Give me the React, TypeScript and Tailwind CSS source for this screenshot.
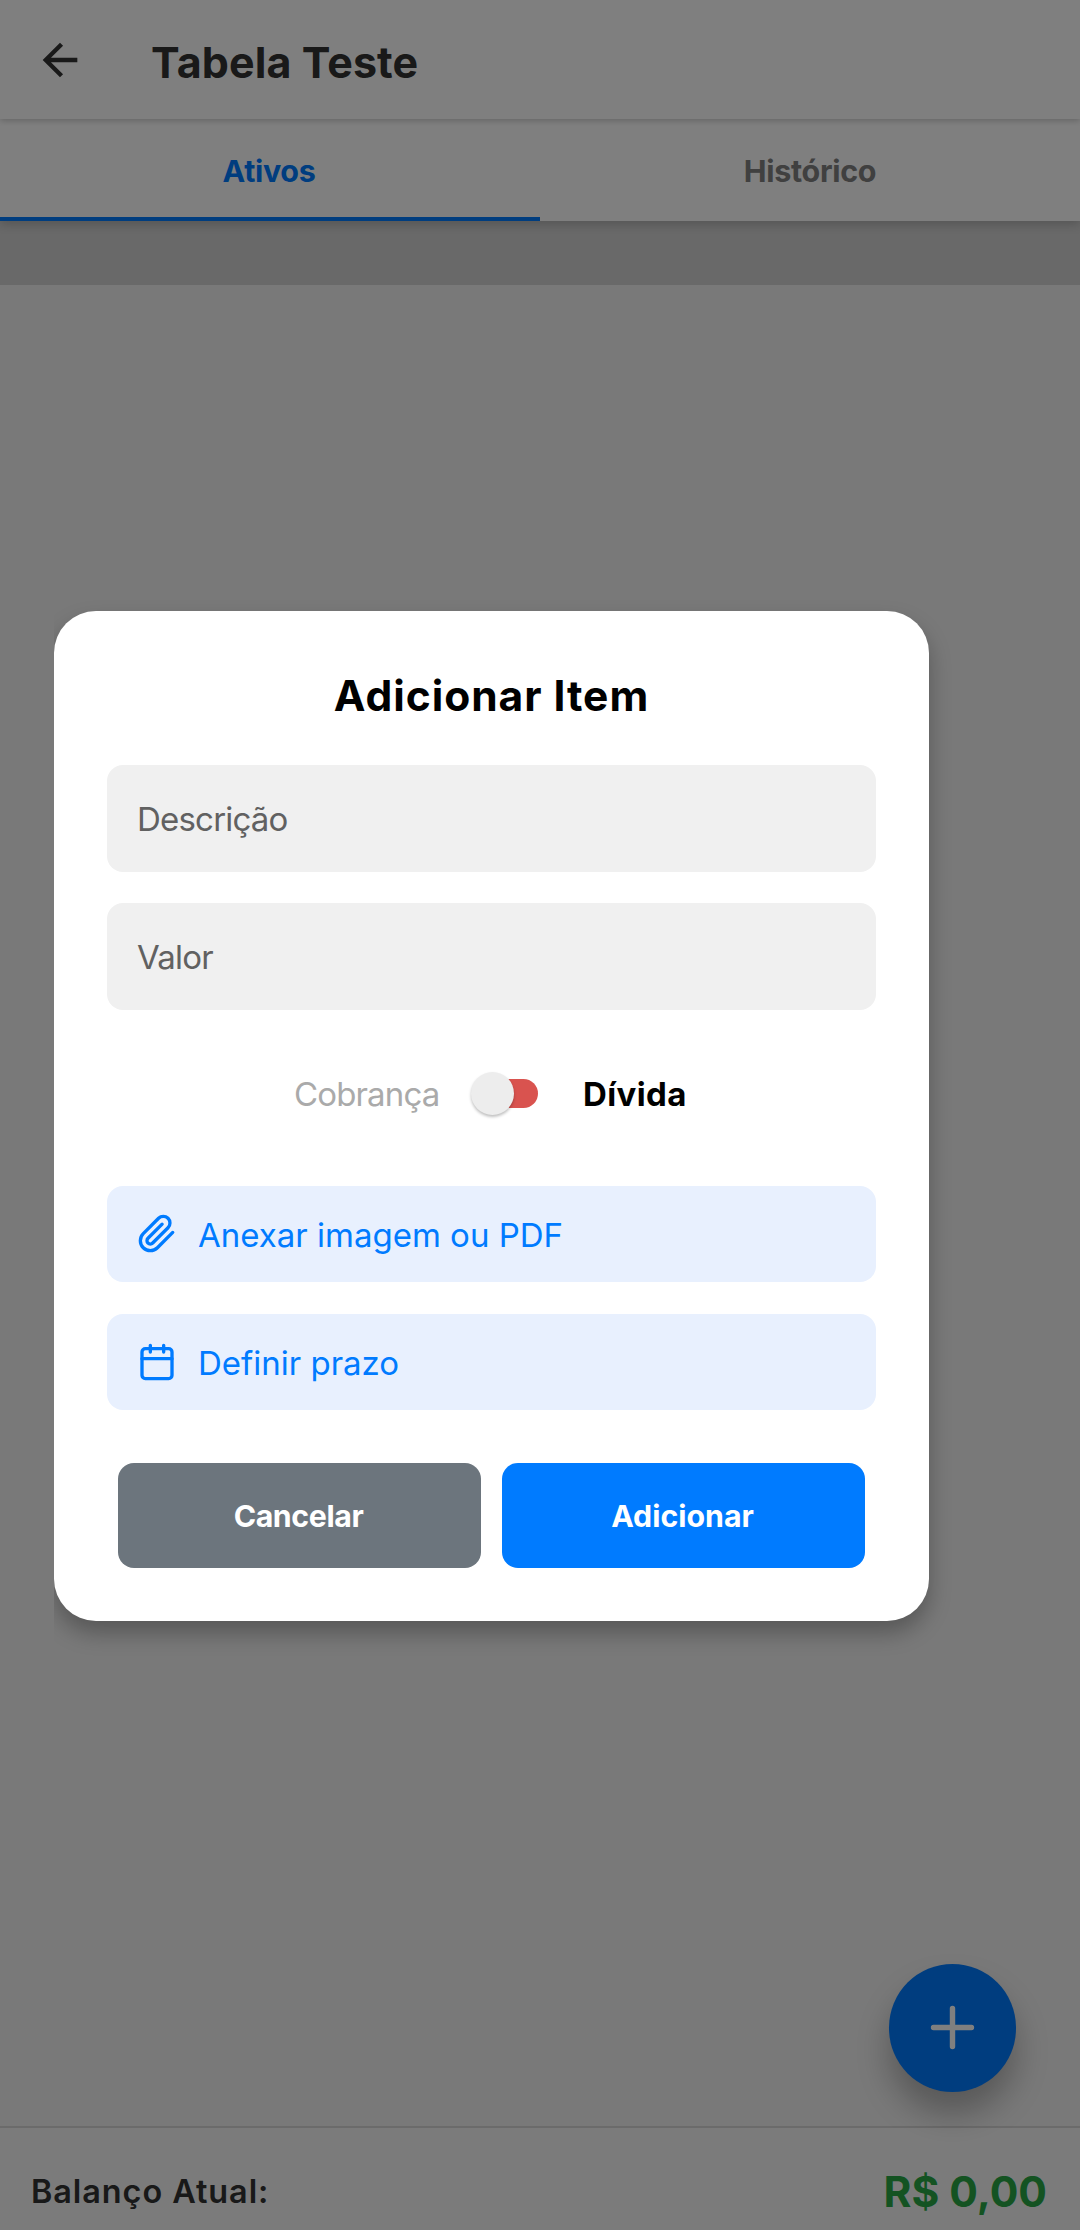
import type { ReactNode } from 'react';

function BackIcon() {
  return (
    <svg viewBox="0 0 24 24" className="h-[52px] w-[52px] shrink-0 fill-[#333333]">
      <path d="M20 11H7.83l5.59-5.59L12 4l-8 8 8 8 1.41-1.41L7.83 13H20v-2z" />
    </svg>
  );
}

function StrokeIcon({ className, children }: { className: string; children: ReactNode }) {
  return (
    <svg
      viewBox="0 0 24 24"
      fill="none"
      stroke="currentColor"
      strokeWidth={2}
      strokeLinecap="round"
      strokeLinejoin="round"
      className={className}
    >
      {children}
    </svg>
  );
}

function Header() {
  return (
    <header className="relative z-10 flex h-[119px] items-center bg-white pl-[34px] shadow-[0_2px_6px_rgba(0,0,0,0.2)]">
      <BackIcon />
      <h1 className="mt-[5px] ml-[65px] text-[43px] leading-none font-bold tracking-[0.1px] text-[#333333]">Tabela Teste</h1>
    </header>
  );
}

function Tabs() {
  return (
    <nav className="relative z-[5] grid h-[102px] grid-cols-2 bg-white text-[30.5px] leading-none font-bold shadow-[0_3px_10px_rgba(0,0,0,0.2)]">
      <button className="flex h-[102px] items-center justify-center border-b-4 border-[#007bff] pt-[6px] pr-[2px] tracking-[-0.35px] text-[#007bff]">
        Ativos
      </button>
      <button className="flex h-[102px] items-center justify-center border-b-4 border-transparent pt-[6px] tracking-[-0.3px] text-[#808080]">
        Histórico
      </button>
    </nav>
  );
}

function Field({ label }: { label: string }) {
  return (
    <label className="flex h-[107px] items-center rounded-2xl bg-[#f0f0f0] px-[30px] pt-[2px] text-[33px] tracking-[-0.8px] text-[#616161]">
      {label}
    </label>
  );
}

function ActionRow({ icon, label }: { icon: ReactNode; label: string }) {
  return (
    <button className="flex h-[96px] items-center rounded-2xl bg-[#e8f0fe] pl-[30px] text-[#007bff]">
      {icon}
      <span className="mt-[2px] ml-[21px] text-[33px] leading-none">{label}</span>
    </button>
  );
}

function Toggle() {
  return (
    <div className="relative h-[44px] w-[68px]">
      <div className="mt-[7px] ml-[8px] h-[29px] w-[59px] rounded-full bg-[#d9534f]" />
      <div className="absolute top-0 left-0 h-[43px] w-[43px] rounded-full bg-[#ededed] shadow-[0_2px_3px_rgba(0,0,0,0.25)]" />
    </div>
  );
}

function Dialog() {
  return (
    <section className="ml-[54px] flex h-[1010px] w-[875px] flex-col rounded-[42px] bg-white px-[53px] shadow-[0_12px_22px_rgba(0,0,0,0.28)]">
      <h2 className="mt-[60px] h-[50px] text-center text-[42.5px] leading-[50px] font-bold tracking-[0.95px] text-black">
        Adicionar Item
      </h2>
      <div className="mt-[44px] flex flex-col gap-[31px]">
        <Field label="Descrição" />
        <Field label="Valor" />
      </div>
      <div className="mt-[61px] flex h-[46px] items-center pl-[187px] text-[33px] leading-none">
        <span className="w-[177px] tracking-[-0.85px] text-[#aaaaaa]">Cobrança</span>
        <Toggle />
        <span className="ml-[44px] font-bold tracking-[0.4px] text-black">Dívida</span>
      </div>
      <div className="mt-[69px] flex flex-col gap-[32px]">
        <ActionRow
          label="Anexar imagem ou PDF"
          icon={
            <StrokeIcon className="h-10 w-10">
              <path d="m21.44 11.05-9.19 9.19a6 6 0 0 1-8.49-8.49l9.19-9.19a4 4 0 0 1 5.66 5.66l-9.2 9.19a2 2 0 0 1-2.83-2.83l8.49-8.48" />
            </StrokeIcon>
          }
        />
        <ActionRow
          label="Definir prazo"
          icon={
            <StrokeIcon className="h-10 w-10">
              <rect x="3" y="4" width="18" height="18" rx="2" />
              <path d="M16 2v4M8 2v4M3 10h18" />
            </StrokeIcon>
          }
        />
      </div>
      <div className="mt-[53px] grid h-[105px] grid-cols-2 gap-[21px] px-[11px] text-[30.3px] font-bold text-white">
        <button className="rounded-2xl bg-[#6c757d] pt-[2px] pr-[2px] tracking-[-0.4px]">Cancelar</button>
        <button className="rounded-2xl bg-[#007bff] pt-[2px] pr-[2px]">Adicionar</button>
      </div>
    </section>
  );
}

export default function App() {
  return (
    <div className="relative flex h-[2230px] w-[1080px] flex-col overflow-hidden bg-[#f2f2f2] font-['Inter',sans-serif]">
      <Header />
      <Tabs />
      <div className="h-[64px] bg-[#d2d2d2]" />
      <main className="flex-1" />
      <footer className="flex h-[104px] items-center justify-between border-t-2 border-[#d6d6d6] bg-[#f7f7f7] pt-[27px] pr-[33px] pl-[31px] leading-none">
        <span className="text-[32.4px] font-semibold tracking-[0.95px] text-[#333333]">Balanço Atual:</span>
        <span className="text-[42.5px] font-bold text-[#28a745]">R$ 0,00</span>
      </footer>
      <button className="absolute right-[64px] bottom-[138px] flex h-[128px] w-[127px] items-center justify-center rounded-full bg-[#007bff] text-white shadow-[0_22px_32px_rgba(0,0,0,0.27)]">
        <StrokeIcon className="mr-[1px] mb-[2px] h-[65px] w-[65px]">
          <path d="M12 5v14M5 12h14" />
        </StrokeIcon>
      </button>
      <div className="absolute inset-0 z-20 bg-black/50 pt-[611px]">
        <div className="[clip-path:inset(-60px_0_-60px_54px)]">
          <Dialog />
        </div>
      </div>
    </div>
  );
}
